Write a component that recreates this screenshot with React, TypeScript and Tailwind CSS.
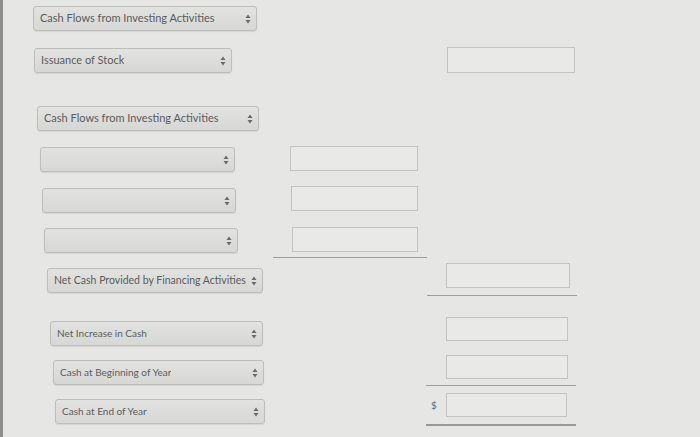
import React from "react";

interface SelectBoxProps {
  label?: string;
  className?: string;
  textClass?: string;
}

function SelectBox({ label = "", className = "", textClass = "text-[11px]" }: SelectBoxProps) {
  return (
    <div
      className={`flex h-[25px] shrink-0 items-center justify-between rounded-[3px] border border-[#bdbdbc] bg-gradient-to-b from-[#e2e3e1] to-[#d7d8d6] pl-[6px] pr-[5px] shadow-[0_1px_1px_rgba(0,0,0,0.08)] ${className}`}
    >
      <span className={`truncate text-[#5b5b5b] ${textClass}`}>{label}</span>
      {/* up/down arrows */}
      <svg width="6" height="10" viewBox="0 0 6 10" className="shrink-0">
        <path d="M3 0.5 L5.5 4 L0.5 4 Z" fill="#6a6a6a" />
        <path d="M3 9.5 L5.5 6 L0.5 6 Z" fill="#6a6a6a" />
      </svg>
    </div>
  );
}

function AmountBox({ className = "" }: { className?: string }) {
  return <div className={`shrink-0 border border-[#c3c3c2] bg-[#e9eae8] ${className}`} />;
}

export default function App() {
  return (
    <div
      className="flex h-[437px] w-[700px] flex-col overflow-hidden border-l-[3px] border-[#8e8e8d] bg-[#e6e7e5]"
      style={{ fontFamily: "Lato, 'Open Sans', sans-serif" }}
    >
      {/* Section header */}
      <div className="flex h-[40px] shrink-0 items-start">
        <SelectBox label="Cash Flows from Investing Activities" className="ml-[30px] mt-[6px] w-[224px]" />
      </div>

      <div className="flex h-[55px] shrink-0 items-start">
        <SelectBox label="Issuance of Stock" className="ml-[31px] mt-[8px] w-[198px]" />
        <AmountBox className="ml-[215px] mt-[7px] h-[26px] w-[128px]" />
      </div>

      <div className="flex h-[45px] shrink-0 items-start">
        <SelectBox label="Cash Flows from Investing Activities" className="ml-[34px] mt-[11px] w-[222px]" />
      </div>

      <div className="flex h-[42px] shrink-0 items-start">
        <SelectBox className="ml-[37px] mt-[7px] w-[195px]" />
        <AmountBox className="ml-[55px] mt-[6px] h-[25px] w-[128px]" />
      </div>

      <div className="flex h-[42px] shrink-0 items-start">
        <SelectBox className="ml-[39px] mt-[6px] w-[194px]" />
        <AmountBox className="ml-[55px] mt-[4px] h-[25px] w-[127px]" />
      </div>

      <div className="flex h-[32px] shrink-0 items-start">
        <SelectBox className="ml-[41px] mt-[4px] w-[194px]" />
        <AmountBox className="ml-[54px] mt-[3px] h-[25px] w-[126px]" />
      </div>

      <div className="h-[2px] shrink-0 pt-px">
        <div className="ml-[270px] h-px w-[154px] bg-[#9d9e9c]" />
      </div>

      <div className="flex h-[40px] shrink-0 items-start">
        <SelectBox
          label="Net Cash Provided by Financing Activities"
          textClass="text-[10.5px]"
          className="ml-[44px] mt-[10px] w-[216px]"
        />
        <div className="ml-[164px] mt-[5px] flex w-[150px] flex-col">
          <AmountBox className="ml-[19px] h-[25px] w-[124px]" />
          <div className="mt-[7px] h-px w-full bg-[#9d9e9c]" />
        </div>
      </div>

      <div className="flex h-[52px] shrink-0 items-start">
        <SelectBox label="Net Increase in Cash" textClass="text-[10px]" className="ml-[47px] mt-[23px] w-[213px]" />
        <AmountBox className="ml-[183px] mt-[19px] h-[24px] w-[122px]" />
      </div>

      <div className="flex h-[38px] shrink-0 items-start">
        <SelectBox label="Cash at Beginning of Year" textClass="text-[10px]" className="ml-[50px] mt-[10px] w-[211px]" />
        <div className="ml-[162px] mt-[5px] flex w-[150px] flex-col">
          <AmountBox className="ml-[20px] h-[24px] w-[122px]" />
          <div className="mt-[6px] h-px w-full bg-[#9d9e9c]" />
        </div>
      </div>

      <div className="flex h-[49px] shrink-0 items-start">
        <SelectBox label="Cash at End of Year" textClass="text-[10px]" className="ml-[52px] mt-[11px] w-[210px]" />
        <div className="ml-[161px] mt-[5px] flex w-[150px] flex-col">
          <div className="flex items-center">
            <span className="w-[20px] pl-[5px] text-[10px] text-[#666]">$</span>
            <AmountBox className="h-[24px] w-[121px]" />
          </div>
          <div className="mt-[7px] h-[2px] w-full bg-[#9a9b99]" />
        </div>
      </div>
    </div>
  );
}
